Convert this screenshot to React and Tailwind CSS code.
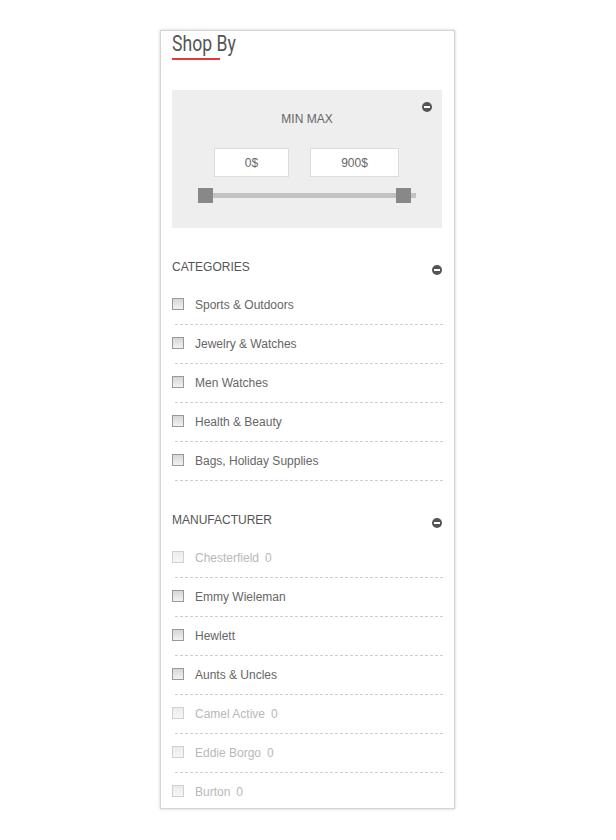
import React from "react";

const MinusIcon = () => (
  <span className="flex h-[10px] w-[10px] items-center justify-center rounded-full bg-[#555]">
    <span className="h-[2px] w-[6px] bg-white" />
  </span>
);

const Checkbox = ({ disabled }) => (
  <span
    className={
      "block h-[12px] w-[12px] shrink-0 border " +
      (disabled
        ? "border-[#d0d0d0] bg-gradient-to-b from-[#ececec] to-[#f6f6f6]"
        : "border-[#999] bg-gradient-to-b from-[#d6d6d6] to-[#f2f2f2]")
    }
  />
);

const Item = ({ label, count, disabled, last }) => (
  <div
    className={
      "ml-[3px] mr-[-1px] pt-[12px] " +
      (last ? "pb-0" : "pb-[12px] border-b border-dashed border-[#cfcfcf]")
    }
  >
    <div className="ml-[-3px] flex items-start">
      <Checkbox disabled={disabled} />
      <span
        className={
          "ml-[11px] text-[12px] leading-[14px] " +
          (disabled ? "text-[#b8b8b8]" : "text-[#666]")
        }
      >
        {label}
        {count !== undefined && <span className="ml-[6px]">{count}</span>}
      </span>
    </div>
  </div>
);

const SectionHeader = ({ title }) => (
  <div className="flex h-[26px] items-start justify-between">
    <span className="text-[12px] leading-[14px] text-[#555]">{title}</span>
    <span className="mt-[5px]">
      <MinusIcon />
    </span>
  </div>
);

export default function App() {
  const categories = [
    "Sports & Outdoors",
    "Jewelry & Watches",
    "Men Watches",
    "Health & Beauty",
    "Bags, Holiday Supplies",
  ];
  const manufacturers = [
    { label: "Chesterfield", count: 0, disabled: true },
    { label: "Emmy Wieleman" },
    { label: "Hewlett" },
    { label: "Aunts & Uncles" },
    { label: "Camel Active", count: 0, disabled: true },
    { label: "Eddie Borgo", count: 0, disabled: true },
    { label: "Burton", count: 0, disabled: true },
  ];
  return (
    <div className="min-h-[840px] bg-white pt-[30px] font-['Liberation_Sans',Arial,sans-serif]">
      <div className="ml-[160px] w-[295px] border border-[#d4d4d4] bg-white pb-[9px] pl-[11px] pr-[12px] shadow-[0_0_3px_rgba(0,0,0,0.2)]">
        {/* Title */}
        <div>
          <div className="h-[26px] origin-left scale-x-[0.8] font-['Roboto',sans-serif] text-[22px] leading-[26px] text-[#555] whitespace-nowrap">
            Shop By
          </div>
          <div className="mt-[1px] h-[2px] w-[48px] bg-[#e53935]" />
        </div>

        {/* Price box */}
        <div className="relative mt-[30px] bg-[#eeeeee] pb-[25px] pt-[22px]">
          <span className="absolute right-[10px] top-[12px]">
            <MinusIcon />
          </span>
          <div className="text-center text-[12px] leading-[14px] text-[#666]">MIN MAX</div>
          <div className="mt-[22px] flex justify-center gap-[21px] pr-[1px]">
            <div className="flex h-[29px] w-[75px] items-center justify-center border border-[#dcdcdc] bg-white text-[12px] text-[#666]">
              0$
            </div>
            <div className="flex h-[29px] w-[89px] items-center justify-center border border-[#dcdcdc] bg-white text-[12px] text-[#666]">
              900$
            </div>
          </div>
          <div className="mx-[26px] mt-[11px]">
            <div className="relative h-[15px]">
              <div className="absolute left-0 right-0 top-[5px] h-[5px] bg-[#c2c2c2]" />
              <div className="absolute left-0 top-0 h-[15px] w-[15px] bg-[#888]" />
              <div className="absolute left-[198px] top-0 h-[15px] w-[15px] bg-[#888]" />
            </div>
          </div>
        </div>

        {/* Categories */}
        <div className="mt-[32px]">
          <SectionHeader title="CATEGORIES" />
          <div>
            {categories.map((c) => (
              <Item key={c} label={c} />
            ))}
          </div>
        </div>

        {/* Manufacturer */}
        <div className="mt-[32px]">
          <SectionHeader title="MANUFACTURER" />
          <div>
            {manufacturers.map((m, i) => (
              <Item
                key={m.label}
                label={m.label}
                count={m.count}
                disabled={m.disabled}
                last={i === manufacturers.length - 1}
              />
            ))}
          </div>
        </div>
      </div>
    </div>
  );
}
